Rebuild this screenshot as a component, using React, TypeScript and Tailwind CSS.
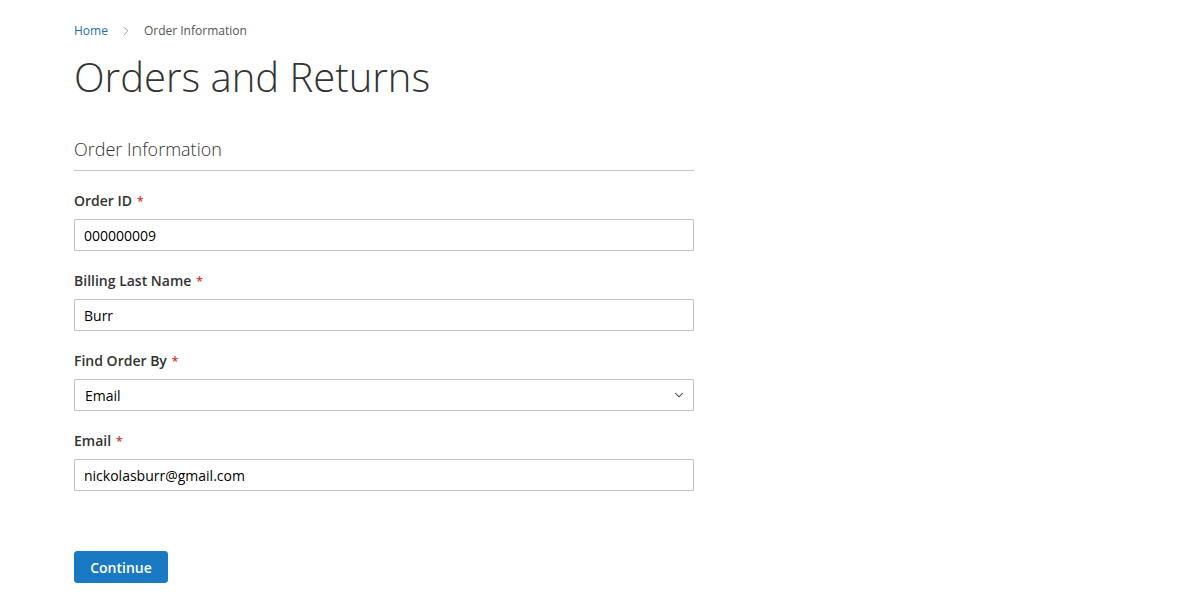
import { ChevronDown, ChevronRight } from 'lucide-react';

const font = { fontFamily: '"Open Sans", "Liberation Sans", sans-serif' };

function Field({ label, children }: { label: string; children: React.ReactNode }) {
  return (
    <div className="mb-[20px]">
      <label className="block h-5 leading-5 text-[14px] font-semibold text-[#333] mb-[8px]">
        {label}
        <span className="text-[#e02b27] text-[12px] ml-[5px]">*</span>
      </label>
      {children}
    </div>
  );
}

function TextInput({ value }: { value: string }) {
  return (
    <input
      readOnly
      value={value}
      className="block w-full h-8 border border-[#c2c2c2] rounded-[1px] px-[9px] text-[14px] text-[#000] bg-white outline-none"
      style={font}
    />
  );
}

export default function App() {
  return (
    <div className="min-h-[600px] bg-white px-[74px] pt-[22px]" style={font}>
      {/* Breadcrumbs */}
      <div className="flex items-center h-[18px] text-[12px] leading-[18px]">
        <a className="text-[#1a6fb0]">Home</a>
        <ChevronRight className="w-[14px] h-[14px] text-[#8a8a8a] mx-[11px]" strokeWidth={1.5} />
        <span className="text-[#555]">Order Information</span>
      </div>

      <h1 className="mt-[15px] text-[40px] leading-[44px] font-light text-[#333]">Orders and Returns</h1>

      <form className="w-[620px] mt-[38px]">
        <div className="text-[18px] leading-[24px] font-light text-[#333] pb-[9px] border-b border-[#c6c6c6] mb-[20px]">
          Order Information
        </div>

        <Field label="Order ID">
          <TextInput value="000000009" />
        </Field>
        <Field label="Billing Last Name">
          <TextInput value="Burr" />
        </Field>
        <Field label="Find Order By">
          <div className="relative h-8 border border-[#c2c2c2] rounded-[1px] bg-white flex items-center pl-[10px] text-[14px] text-[#000]">
            Email
            <ChevronDown className="absolute right-[7px] top-[8px] w-[14px] h-[14px] text-[#333]" strokeWidth={1.75} />
          </div>
        </Field>
        <Field label="Email">
          <TextInput value="nickolasburr@gmail.com" />
        </Field>

        <button
          type="button"
          className="mt-[40px] h-8 w-[94px] rounded-[3px] bg-[#1979c3] border border-[#1979c3] text-white text-[14px] font-semibold"
          style={font}
        >
          Continue
        </button>
      </form>
    </div>
  );
}
